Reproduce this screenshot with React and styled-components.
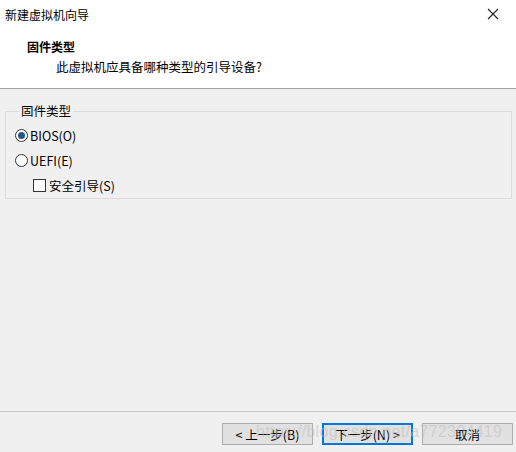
import React, { useState } from 'react'
import styled, { createGlobalStyle } from 'styled-components'

const GlobalStyle = createGlobalStyle`
  html, body {
    margin: 0;
    padding: 0;
    background: #f0f0f0;
  }
  body {
    font-family: "Noto Sans CJK SC", "Microsoft YaHei", sans-serif;
    font-size: 12px;
    color: #000;
  }
`

const Window = styled.div`
  position: relative;
  width: 516px;
  height: 452px;
  display: flex;
  flex-direction: column;
  background: #f0f0f0;
  overflow: hidden;
`

const TitleBar = styled.div`
  height: 30px;
  display: flex;
  align-items: center;
  justify-content: space-between;
  padding: 0 0 0 5px;
  background: #fff;
  font-size: 12px;
  margin-top: -1px;
`

const CloseButton = styled.div`
  width: 46px;
  height: 30px;
  display: flex;
  align-items: center;
  justify-content: center;
`

const Header = styled.div`
  height: 60px;
  background: #fff;
  border-bottom: 1px solid #a0a0a0;
  padding: 7px 0 0 27px;
  box-sizing: border-box;
`

const HeaderTitle = styled.div`
  font-weight: bold;
  font-size: 12px;
  line-height: 18px;
  margin-top: 2px;
`

const HeaderText = styled.div`
  padding-left: 29px;
  line-height: 18px;
  margin-top: 2px;
  font-size: 12.5px;
`

const Body = styled.div`
  flex: 1;
  padding: 15px 4px 0 5px;
  box-sizing: border-box;
`

const Group = styled.fieldset`
  margin: 0;
  height: 95px;
  box-sizing: border-box;
  border: 1px solid #dcdcdc;
  border-radius: 0;
  padding: 8px 0 0 9px;
  display: flex;
  flex-direction: column;
  gap: 7px;
`

const Legend = styled.legend`
  padding: 0 2px;
  margin-left: 4px;
  font-size: 12.5px;
  line-height: 14px;
`

const Option = styled.label`
  display: flex;
  align-items: center;
  gap: 2px;
  height: 18px;
  font-size: 12.5px;
  padding-left: ${p => p.$indent ? '18px' : '0'};
`

const RadioDot = styled.span`
  width: 11px;
  height: 11px;
  border-radius: 50%;
  border: 1px solid #333;
  background: #fff;
  display: flex;
  align-items: center;
  justify-content: center;
  &::after {
    content: '';
    width: 7px;
    height: 7px;
    border-radius: 50%;
    background: ${p => p.$checked ? '#1e5a8c' : 'transparent'};
  }
`

const Box = styled.span`
  width: 11px;
  height: 11px;
  border: 1px solid #333;
  background: #fff;
  margin-right: 1px;
`

const Footer = styled.div`
  border-top: 1px solid #c8c8c8;
  height: 41px;
  box-sizing: border-box;
  display: flex;
  justify-content: flex-end;
  align-items: flex-start;
  gap: 9px;
  padding: 11px 3px 0 0;
`

const Button = styled.div`
  width: 91px;
  height: 22px;
  box-sizing: border-box;
  border: ${p => p.$primary ? '2px solid #0078d7' : '1px solid #adadad'};
  background: #e1e1e1;
  display: flex;
  align-items: center;
  justify-content: center;
  font-size: 12.5px;
`

const Watermark = styled.div`
  position: absolute;
  left: 256px;
  top: 423px;
  font-family: "Liberation Sans", Arial, sans-serif;
  font-size: 16px;
  color: rgba(190, 190, 190, 0.55);
  pointer-events: none;
  letter-spacing: 0.3px;
`

const App = () => {
  const [mode, setMode] = useState('bios')

  return (
    <>
      <GlobalStyle />
      <Window>
        <TitleBar>
          <span>新建虚拟机向导</span>
          <CloseButton>
            <svg width="12" height="12" viewBox="0 0 12 12">
              <path d="M1 1 L11 11 M11 1 L1 11" stroke="#222" strokeWidth="1.1" />
            </svg>
          </CloseButton>
        </TitleBar>
        <Header>
          <HeaderTitle>固件类型</HeaderTitle>
          <HeaderText>此虚拟机应具备哪种类型的引导设备?</HeaderText>
        </Header>
        <Body>
          <Group>
            <Legend>固件类型</Legend>
            <Option onClick={() => setMode('bios')}>
              <RadioDot $checked={mode === 'bios'} />BIOS(O)
            </Option>
            <Option onClick={() => setMode('uefi')}>
              <RadioDot $checked={mode === 'uefi'} />UEFI(E)
            </Option>
            <Option $indent>
              <Box />安全引导(S)
            </Option>
          </Group>
        </Body>
        <Footer>
          <Button>&lt; 上一步(B)</Button>
          <Button $primary>下一步(N) &gt;</Button>
          <Button>取消</Button>
        </Footer>
        <Watermark>https://blog.csdn.net/a772304419</Watermark>
      </Window>
    </>
  )
}

export default App
